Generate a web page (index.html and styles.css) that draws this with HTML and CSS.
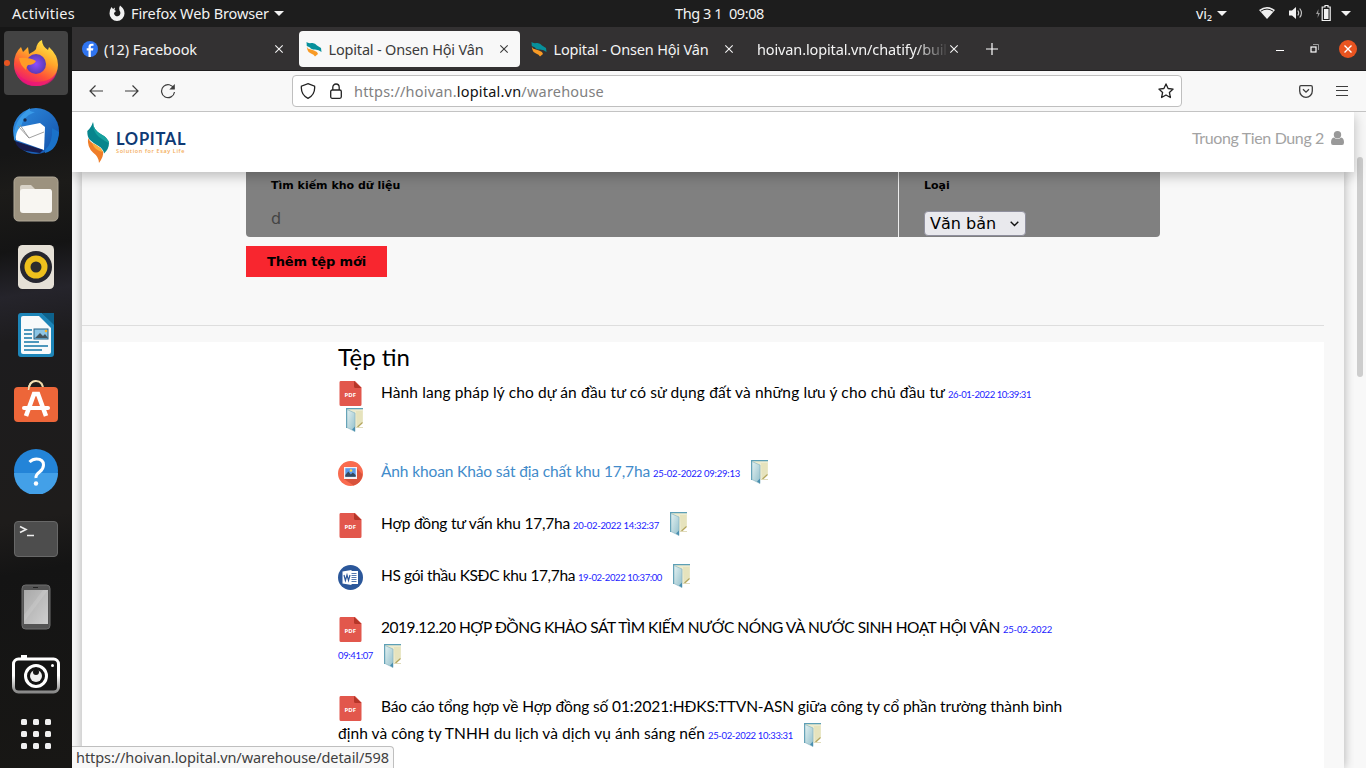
FILE: index.html
```html
<!DOCTYPE html>
<html lang="vi">
<head>
<meta charset="utf-8">
<title>Lopital - Onsen Hội Vân</title>
<link rel="stylesheet" href="styles.css">
</head>
<body>
<svg width="0" height="0" class="defs">
  <defs>
    <linearGradient id="fxg" x1="0.8" y1="0" x2="0.3" y2="1"><stop offset="0" stop-color="#fff04a"/><stop offset=".4" stop-color="#ffa52a"/><stop offset=".7" stop-color="#ff5038"/><stop offset="1" stop-color="#e8127c"/></linearGradient>
    <radialGradient id="fxp"><stop offset="0" stop-color="#8d4dff"/><stop offset="1" stop-color="#5b3bb5"/></radialGradient>
    <linearGradient id="tb" x1="0" y1="0" x2="1" y2="1"><stop offset="0" stop-color="#2f8de0"/><stop offset="1" stop-color="#124fa8"/></linearGradient>
    <linearGradient id="cam" x1="0" y1="0" x2="0" y2="1"><stop offset=".5" stop-color="#fff"/><stop offset="1" stop-color="#888"/></linearGradient>
    <linearGradient id="scr" x1="0" y1="0" x2="1" y2="1"><stop offset="0" stop-color="#a9a9a9"/><stop offset="1" stop-color="#cfcfcf"/></linearGradient>
    <linearGradient id="glass" x1="0" y1="0" x2="1" y2="1"><stop offset="0" stop-color="#e4f1f0"/><stop offset="1" stop-color="#93c0cc"/></linearGradient>
    <symbol id="pdf" viewBox="0 0 25 25"><path d="M2.500 0H17l6.500 6.500V23.500a1.500 1.500 0 0 1-1.500 1.500H3a1.500 1.500 0 0 1-1.500-1.500V1.500A1.500 1.500 0 0 1 2.500 0z" fill="#e2574c"/><path d="M16 0l7.500 7H17.500A1.500 1.500 0 0 1 16 5.500z" fill="#b53629"/></symbol>
    <symbol id="img" viewBox="0 0 25 25"><circle cx="12.500" cy="12.500" r="12.500" fill="#f96b4f"/><path d="M18 6.500l6.500 7a12 12 0 0 1-9 11L6 18z" fill="#d8533c"/><rect x="6" y="6" width="13" height="12" fill="#f2f2f5"/><rect x="7.300" y="7.200" width="10.400" height="8.600" fill="#5b9bea"/><path d="M7.300 14l3-3.500 2.500 3 2-2 2.900 2.500v1.800H7.300z" fill="#34495e"/><circle cx="13" cy="9.500" r="1.300" fill="#f8d64e"/></symbol>
    <symbol id="word" viewBox="0 0 25 25"><circle cx="12.500" cy="12.500" r="12.500" fill="#2b579a"/><path d="M12 6h8v13h-8z" fill="#fff"/><path d="M13 8.500h5.500M13 10.500h5.500M13 12.500h5.500M13 14.500h5.500M13 16.500h5.500" stroke="#2b579a" stroke-width=".8"/><path d="M4.500 6.500l9-1.500v15l-9-1.500z" fill="#fff"/><path d="M6 10l1.400 5.500L9 10l1.500 5.500L12 10" fill="none" stroke="#2b579a" stroke-width="1.200"/></symbol>
    <symbol id="folder" viewBox="0 0 18 24"><path d="M1 .5h16v14L13 19H1z" fill="#edebcf"/><path d="M10 3h6.500v11L11 18z" fill="#e6e3bd"/><path d="M.5 20V.7H17" fill="none" stroke="#5c9fb6" stroke-width="1.200"/><path d="M1 1.500l8 3.500v18.500L1 19.500z" fill="url(#glass)" stroke="#7fb0c0" stroke-width=".6"/><path d="M6 21.500l3 2V18.500z" fill="#4a8fb0"/><path d="M11.500 19l5-4.500" stroke="#b3a45c" stroke-width="1.200"/><path d="M9.500 19.500H17" stroke="#d8d2aa" stroke-width=".8"/></symbol>
    <symbol id="x" viewBox="0 0 10 10"><path d="M1.300 1.300l7.400 7.400M8.700 1.300L1.300 8.700" fill="none" stroke="currentColor" stroke-width="1.100"/></symbol>
    <symbol id="caret" viewBox="0 0 10 5"><path d="M0 0h10L5 5z" fill="currentColor"/></symbol>
    <symbol id="fav" viewBox="0 0 16 16"><path d="M.5 1Q2 2.500 5.500 2T11 4.500L15 7l.5 4Q13 8.500 9 8.500T4 6.500L.8 5z" fill="#07909b"/><path d="M.8 6Q2 8 5 8.500T11 11l1 2-3 2.500Q8 13.500 5 12.500T1.500 9z" fill="#f89a25"/></symbol>
  </defs>
</svg>
<div class="topbar">
  <span class="activities">Activities</span>
  <svg class="fxmono" width="16" height="16" viewBox="0 0 16 16"><path fill-rule="evenodd" d="M1 5l1.500-3 1.500 2 2-1.500-.5 2.500L7 6 5 8a3.200 3.200 0 1 0 5.500-2.200Q9.500 3 11 .5q4.500 3 4.500 8a7.500 7.500 0 0 1-15 0z" fill="#f2f2f2"/></svg>
  <span class="appname">Firefox Web Browser</span>
  <svg class="appcaret" width="10" height="5"><use href="#caret"/></svg>
  <span class="clock">Thg 3 1 &nbsp;09:08</span>
  <span class="tray">
    <span class="vi">vi₂</span>
    <svg class="vicaret" width="10" height="5"><use href="#caret"/></svg>
    <svg class="wifi" width="16" height="12" viewBox="0 0 16 12"><path d="M0 3Q8-3 16 3L8 12z" fill="#eee"/><path d="M1.800 4.200Q8 0 14.200 4.200" fill="none" stroke="#1d1d1d" stroke-width="1"/></svg>
    <svg class="vol" width="16" height="14" viewBox="0 0 16 14"><path d="M1 4.500h3L8 1v12L4 9.500H1z" fill="#f2f2f2"/><path d="M9.800 4.500q1.800 2.500 0 5M11.700 2.500q3.500 4.500 0 9" fill="none" stroke="#ccc" stroke-width="1.100"/></svg>
    <svg class="bat" width="15" height="16" viewBox="0 0 15 16"><path d="M2.500 4L0 9h2l-.5 4L4 8H2.200z" fill="#999"/><path d="M9 .5h3v1.500h2.200v13.500H6.200V2H9z" fill="none" stroke="#f2f2f2" stroke-width="1.200"/><rect x="8" y="4" width="4.500" height="10" fill="#f2f2f2"/></svg>
    <svg class="syscaret" width="10" height="5"><use href="#caret"/></svg>
  </span>
</div>
<div class="desktop">
  <aside class="dock">
    <div class="tile active"><i class="running"></i>
      <svg width="46" height="48" viewBox="0 0 46 48"><path d="M1 25Q1 14 8 8l2 5 5-5 1 7q6-3 7-5Q24 3 29 1q0 6 6 10l1-3q9 8 9 18a22 21 0 0 1-44 0z" fill="url(#fxg)"/><path d="M2 29q5 14 21 14t21-11q-3 15-21 15T2 29z" fill="#e8127c" opacity=".65"/><circle cx="23" cy="25" r="10" fill="url(#fxp)"/><path d="M6 19q10-1 17 3-2 4-8 4-2 2-2 5Q7 26 6 19z" fill="#ff9b27"/></svg></div>
    <div class="tile"><svg width="48" height="48" viewBox="0 0 48 48"><circle cx="24" cy="24" r="23" fill="url(#tb)"/><path d="M2 34Q0 14 18 1q-2 4 5 4Q10 10 9 20z" fill="#3a9be8"/><path d="M8 20L28 16l5 4-1 23L4 33q-1-7 4-13z" fill="#fff"/><path d="M8 18l9 13 15-6M17 31L6 19" fill="none" stroke="#888" stroke-width=".8"/><path d="M3 34l28 9-3 3-14-2Q5 42 3 34z" fill="#161b4c"/><path d="M33 43q8-7 7-22l7 4q-1 18-14 21z" fill="#1a72c9"/><circle cx="13" cy="13" r="1.700" fill="#182b50"/></svg></div>
    <div class="tile"><svg width="46" height="46" viewBox="0 0 46 46"><rect x="1" y="1" width="44" height="44" rx="4.500" fill="#9c927f" stroke="#b1a998" stroke-width="1"/><path d="M7 11q0-2 2-2h9l4 4h15q1 0 1 2v6H7z" fill="#d8d2c7"/><rect x="7" y="13" width="32" height="24" rx="3" fill="#f8f6f2"/></svg></div>
    <div class="tile"><svg width="38" height="46" viewBox="0 0 38 46"><rect x="1" y="1" width="36" height="44" rx="4.500" fill="#e5e0d6"/><circle cx="19" cy="23" r="16" fill="#26262f"/><circle cx="19" cy="23" r="11.500" fill="#eec01d"/><circle cx="19" cy="23" r="5.500" fill="#2d2d2d"/></svg></div>
    <div class="tile"><svg width="38" height="46" viewBox="0 0 38 46"><path d="M4 1h21l12 11v30q0 3-3 3H4q-3 0-3-3V4q0-3 3-3z" fill="#1d85b8"/><path d="M25 1h12v12z" fill="#0d628c"/><path d="M6 4h16l12 12v24q0 2-2 2H6q-2 0-2-2V6q0-2 2-2z" fill="#f8fafb"/><path d="M7 18h8M7 22h8M7 26h8M7 34h24M7 38h18M7 30h15" stroke="#1477a8" stroke-width="1.500"/><rect x="17" y="17" width="14" height="10" fill="#8dc5e5" stroke="#24658a"/><path d="M18 26l5-5 3 3 2-2 3 4z" fill="#44545c"/><circle cx="29" cy="19" r="1.300" fill="#ffb325"/></svg></div>
    <div class="tile store"><svg width="46" height="46" viewBox="0 0 46 46"><path d="M15.500 13Q16 3 23 3t7.500 10" fill="none" stroke="#efd9aa" stroke-width="2"/><rect x="1" y="9" width="44" height="35" rx="4" fill="#ed6639"/><path d="M15.500 12Q16 3 23 3" fill="none" stroke="#f5e3b9" stroke-width="1.500"/><path d="M13 38l8-22h4l8 22" fill="none" stroke="#fff" stroke-width="4.500"/><rect x="9" y="28" width="28" height="4" rx="2" fill="#fff"/></svg></div>
    <div class="tile"><svg width="46" height="46" viewBox="0 0 46 46"><circle cx="23" cy="23" r="22" fill="#2384d8"/><path d="M1 25h44a22 22 0 0 1-44 0z" fill="#43a0e8"/><path d="M16.500 14q3-3 7-3 7 0 7 6 0 4-4 7t-3.500 6" fill="none" stroke="#fff" stroke-width="3"/><circle cx="23" cy="35.500" r="2.200" fill="#fff"/></svg></div>
    <div class="tile"><svg width="46" height="38" viewBox="0 0 46 38"><rect x="1.500" y="1.500" width="43" height="35" rx="3.500" fill="#4d4d4d" stroke="#686868"/><path d="M7 6.500l6 3-6 3M14 15.500h7" fill="none" stroke="#eee" stroke-width="1.600"/></svg></div>
    <div class="tile"><svg width="30" height="46" viewBox="0 0 30 46"><rect x="1" y="1" width="28" height="44" rx="3.500" fill="#545454" stroke="#6e6e6e"/><rect x="3" y="6" width="24" height="34" fill="url(#scr)"/><path d="M3 31L22 6h5L3 38z" fill="#fff" opacity=".12"/><path d="M12 3.500h5" stroke="#222"/></svg></div>
    <div class="tile camera"><svg width="48" height="40" viewBox="0 0 48 40"><path d="M9 5V1h6v4" fill="#fff"/><rect x="1.500" y="5" width="45" height="33" rx="5" fill="#141414" stroke="url(#cam)" stroke-width="3"/><circle cx="24" cy="22" r="10.500" fill="none" stroke="#fff" stroke-width="3"/><circle cx="24" cy="22" r="6" fill="#eee"/><circle cx="24" cy="18" r="3" fill="#141414"/><circle cx="40.500" cy="11.500" r="1.500" fill="#fff"/></svg></div>
    <div class="tile apps"><i></i><i></i><i></i><i></i><i></i><i></i><i></i><i></i><i></i></div>
  </aside>
  <section class="window">
    <div class="tabs">
      <div class="tab t1"><svg width="16" height="16" viewBox="0 0 16 16"><circle cx="8" cy="8" r="8" fill="#2f74f0"/><path d="M8.800 16V9.500H11l.4-2.200H8.800V6q0-1.200 1.300-1.200h1.400v-2Q6.500 2 6.500 5.700v1.600H4.700v2.200h1.800V16z" fill="#fff"/></svg><span class="label">(12) Facebook</span><svg class="x" width="10" height="10"><use href="#x"/></svg></div>
      <div class="tab t2"><svg width="16" height="16"><use href="#fav"/></svg><span class="label">Lopital - Onsen Hội Vân</span><svg class="x" width="10" height="10"><use href="#x"/></svg></div>
      <div class="tab t3"><svg width="16" height="16"><use href="#fav"/></svg><span class="label">Lopital - Onsen Hội Vân</span><svg class="x" width="10" height="10"><use href="#x"/></svg></div>
      <div class="tab t4"><span class="label">hoivan.lopital.vn/chatify/buil</span><svg class="x" width="10" height="10"><use href="#x"/></svg></div>
      <svg class="plus" width="12" height="12" viewBox="0 0 12 12"><path d="M6 0v12M0 6h12" stroke="#fff" stroke-width="1.200"/></svg>
      <div class="winbtns"><svg width="8" height="9" viewBox="0 0 8 9"><path d="M0 6.500h8" stroke="#fff"/></svg><svg width="9" height="9" viewBox="0 0 9 9"><path d="M3 .5h5.500V6" fill="none" stroke="#999"/><rect x="1" y="3" width="5" height="5" fill="none" stroke="#fff" stroke-width="1.200"/></svg><svg width="18" height="18" viewBox="0 0 18 18"><circle cx="9" cy="9" r="9" fill="#e95420"/><path d="M5.500 5.500l7 7M12.500 5.500l-7 7" stroke="#fff" stroke-width="1.400"/></svg></div>
    </div>
    <div class="toolbar">
      <svg width="14" height="12" viewBox="0 0 14 12"><path d="M14 6H1M6.500.5L1 6l5.500 5.500" fill="none" stroke="#3d3d3d" stroke-width="1.200"/></svg>
      <svg width="14" height="12" viewBox="0 0 14 12"><path d="M0 6h13M7.500.5L13 6l-5.500 5.500" fill="none" stroke="#3d3d3d" stroke-width="1.200"/></svg>
      <svg class="reload" width="16" height="16" viewBox="0 0 16 16"><path d="M14 5.500A6.500 6.500 0 1 0 14.500 9" fill="none" stroke="#3d3d3d" stroke-width="1.200"/><path d="M14.800 1v5.500H9.300z" fill="#3d3d3d"/></svg>
      <div class="urlbar">
        <svg width="16" height="16" viewBox="0 0 16 16"><path d="M8 .7l6.600 2.500q.8 8.500-6.600 12.200Q.6 11.700 1.400 3.200z" fill="none" stroke="#222" stroke-width="1.300"/></svg>
        <svg class="lock" width="12" height="16" viewBox="0 0 12 16"><rect x=".7" y="7" width="10.600" height="8.300" rx="1.500" fill="none" stroke="#222" stroke-width="1.300"/><path d="M2.800 7V4.200a3.200 3.200 0 0 1 6.400 0V7" fill="none" stroke="#222" stroke-width="1.300"/></svg>
        <span class="url">https://hoivan.<b>lopital.vn</b>/warehouse</span>
        <svg class="star" width="16" height="16" viewBox="0 0 16 16"><path d="M8 .9l2.100 4.600 5 .6-3.700 3.400 1 5L8 12l-4.400 2.500 1-5L.9 6.100l5-.6z" fill="none" stroke="#222" stroke-width="1.300" stroke-linejoin="round"/></svg>
      </div>
      <svg class="pocket" width="14" height="13" viewBox="0 0 14 13"><path d="M2 .7h10q1.300 0 1.300 1.300v4a6.300 6.300 0 0 1-12.600 0V2Q.7.700 2 .7z" fill="none" stroke="#3d3d3d" stroke-width="1.300"/><path d="M4 4.300l3 2.900 3-2.900" fill="none" stroke="#3d3d3d" stroke-width="1.300"/></svg>
      <svg class="menu" width="12" height="10" viewBox="0 0 12 10"><path d="M0 .5h12M0 4.500h12M0 9.500h12" stroke="#3d3d3d"/></svg>
    </div>
    <div class="viewport">
      <div class="page">
        <header class="site">
          <svg width="22" height="41" viewBox="0 0 22 41"><path d="M6 0Q4 6 .3 9q0 6 2.200 8.500Q6 21 11.500 24q5 3 5.500 7.500Q22 27 22 21q-1-5-7.500-8.500Q6 8 6 0z" fill="#07858d"/><path d="M6 0q-1 9 6 15 7 5 10 6-1-5-7.500-8.500Q6 8 6 0z" fill="#17a29f"/><path d="M1 16q-1 9 5 14.500 6 4.500 6 10.500Q17 34 16 29.500 13 25 8 22.500 3 20 1 16z" fill="#ef7d28"/><path d="M5 21q3 8 11 9-3-5-8-7.500z" fill="#fbb03b"/></svg>
          <div class="brand"><b>LOPITAL</b><small>Solution for Esay Life</small></div>
          <div class="user"><span>Truong Tien Dung 2</span><svg width="13" height="14" viewBox="0 0 13 14"><circle cx="6.500" cy="3.700" r="3.700" fill="#999"/><path d="M3 6.500q3.500 3 7 0 3 .5 3 5 0 2.500-2 2.500H2q-2 0-2-2.500 0-4.500 3-5z" fill="#999"/></svg></div>
        </header>
        <main class="container">
          <div class="search">
            <div class="field keyword"><label>Tìm kiếm kho dữ liệu</label><span class="value">d</span></div>
            <div class="field type"><label>Loại</label><div class="select"><span>Văn bản</span><svg width="9" height="6" viewBox="0 0 9 6"><path d="M.7.700l3.800 3.800L8.300.7" fill="none" stroke="#111" stroke-width="1.400"/></svg></div></div>
          </div>
          <div class="add">Thêm tệp mới</div>
          <div class="files">
            <h2>Tệp tin</h2>
            <div class="file legal"><div class="line"><svg class="ic"><use href="#pdf"/><text x="6.500" y="15.500" textLength="11.500">PDF</text></svg><a>Hành lang pháp lý cho dự án đầu tư có sử dụng đất và những lưu ý cho chủ đầu tư</a><time>26-01-2022 10:39:31</time></div><div class="line more"><svg class="fo lead"><use href="#folder"/></svg></div></div>
            <div class="file photo"><div class="line"><svg class="ic"><use href="#img"/></svg><a class="hover">Ảnh khoan Khảo sát địa chất khu 17,7ha</a><time>25-02-2022 09:29:13</time><svg class="fo"><use href="#folder"/></svg></div></div>
            <div class="file consult"><div class="line"><svg class="ic"><use href="#pdf"/><text x="6.500" y="15.500" textLength="11.500">PDF</text></svg><a>Hợp đồng tư vấn khu 17,7ha</a><time>20-02-2022 14:32:37</time><svg class="fo"><use href="#folder"/></svg></div></div>
            <div class="file bid"><div class="line"><svg class="ic"><use href="#word"/></svg><a>HS gói thầu KSĐC khu 17,7ha</a><time>19-02-2022 10:37:00</time><svg class="fo"><use href="#folder"/></svg></div></div>
            <div class="file survey"><div class="line"><svg class="ic"><use href="#pdf"/><text x="6.500" y="15.500" textLength="11.500">PDF</text></svg><a>2019.12.20 HỢP ĐỒNG KHẢO SÁT TÌM KIẾM NƯỚC NÓNG VÀ NƯỚC SINH HOẠT HỘI VÂN</a><time>25-02-2022</time></div><div class="line more"><time class="lead">09:41:07</time><svg class="fo"><use href="#folder"/></svg></div></div>
            <div class="file report"><div class="line"><svg class="ic"><use href="#pdf"/><text x="6.500" y="15.500" textLength="11.500">PDF</text></svg><a>Báo cáo tổng hợp về Hợp đồng số 01:2021:HĐKS:TTVN-ASN giữa công ty cổ phần trường thành bình</a></div><div class="line more"><a>định và công ty TNHH du lịch và dịch vụ ánh sáng nến</a><time>25-02-2022 10:33:31</time><svg class="fo"><use href="#folder"/></svg></div></div>
          </div>
        </main>
      </div>
      <div class="scrollbar"><i></i></div>
      <div class="status">https://hoivan.lopital.vn/warehouse/detail/598</div>
    </div>
  </section>
</div>
</body>
</html>
```
FILE: styles.css
```css
* { box-sizing: border-box; }
body { margin: 0; width: 1366px; height: 768px; overflow: hidden; background: #161616; font-family: "Noto Sans", "Open Sans", sans-serif; font-size: 14.5px; white-space: nowrap; }
svg { display: block; flex: none; }
.defs { position: absolute; }

/* system bar */
.topbar { height: 27px; background: #1d1d1d; color: #f2f2f2; display: flex; align-items: center; padding: 0 0 1px 12px; line-height: 24px; }
.activities { width: 97px; letter-spacing: .258px; }
.fxmono { margin-right: 6px; }
.appname { width: 143px; letter-spacing: -.118px; }
.appcaret { margin-right: 391px; }
.clock { width: 521px; letter-spacing: -.405px; }
.tray { display: flex; align-items: center; }
.vi { width: 21px; }
.vicaret { margin-right: 32px; }
.wifi { margin-right: 13px; }
.vol { margin-right: 12px; }
.bat { margin-right: 10px; }

/* dock */
.desktop { display: flex; height: 741px; }
.dock { width: 72px; padding: 4px; display: flex; flex-direction: column; gap: 4px; background: linear-gradient(170deg, #161616 0 17%, #1c1b19 22%, #141414 30%, #25242b 36%, #1d1c1e 42%, #1e1c1b 66%, #141414 73%, #181715 100%); }
.tile { height: 64px; display: flex; align-items: center; justify-content: center; border-radius: 4px; position: relative; }
.tile.active { background: #434343; }
.tile.store { padding-bottom: 5px; }
.tile.camera { padding-bottom: 3px; }
.running { position: absolute; left: 0; top: 29px; width: 6px; height: 6px; border-radius: 3px; background: #e95420; }
.tile.apps { height: 46px; display: grid; grid-template-columns: repeat(3, 6px); gap: 6px; align-content: center; }
.apps i { height: 6px; border-radius: 1.5px; background: #f0f0f0; }

/* browser window */
.window { width: 1294px; display: flex; flex-direction: column; }
.tabs { height: 44px; background: #333132; border-bottom: 1px solid #1f1e1f; color: #f4f4f4; display: flex; align-items: center; }
.tab { height: 36px; display: flex; align-items: center; border-radius: 4px; }
.tab > svg:first-child { margin-right: 6px; }
.tab .label { overflow: hidden; letter-spacing: -.175px; }
.t1 { width: 227px; padding-left: 10px; }
.t1 .label { width: 170px; letter-spacing: -.082px; }
.t2 { width: 221px; padding-left: 7px; background: #f8f8f8; color: #3b3b3b; }
.t2 .label, .t3 .label { width: 171px; padding-left: .5px; }
.t3 { width: 225px; padding-left: 11px; }
.t4 { width: 229px; padding-left: 12px; }
.t4 .label { width: 190px; letter-spacing: -.13px; -webkit-mask-image: linear-gradient(90deg, #000 158px, transparent 192px); mask-image: linear-gradient(90deg, #000 158px, transparent 192px); }
.t4 .x { margin-left: 2px; }
.plus { margin-left: 12px; }
.winbtns { margin-left: 278px; display: flex; align-items: center; gap: 26px; }
.winbtns svg:last-child { margin-left: -6px; }
.toolbar { height: 41px; background: #f8f8f8; border-bottom: 1px solid #c3c3c3; display: flex; align-items: center; padding-left: 17px; gap: 22px; }
.reload { margin: 0 1px 0 -1px; }
.urlbar { width: 890px; height: 32px; margin-left: 93px; background: #fff; border: 1px solid #bfbfbf; border-radius: 4px; display: flex; align-items: center; padding-left: 7px; color: #818181; }
.lock { margin: 0 12px 0 14px; }
.url { width: 804px; letter-spacing: .202px; }
.url b { font-weight: 400; color: #111; }
.pocket { margin-left: 95px; }
.menu { margin-left: 1px; }

/* page */
.viewport { height: 656px; display: flex; position: relative; overflow: hidden; }
.page { width: 1282px; background: #f8f8f8; }
.site { height: 60px; background: #fff; display: flex; padding-left: 15px; position: relative; z-index: 2; box-shadow: 0 4px 12px rgba(0, 0, 0, .25); align-items: center; }
.brand { width: 1083px; padding-left: 7px; display: flex; flex-direction: column; }
.brand b { font: 700 16.5px/18px Lato, sans-serif; letter-spacing: .7px; color: #0e3a75; }
.brand small { font: 600 5.5px/7px "Open Sans", sans-serif; letter-spacing: .612px; color: #f3ac58; }
.user { display: flex; align-items: center; color: #a3a3a3; font: 400 16px/20px Lato, sans-serif; letter-spacing: -.371px; margin-top: -9px; }
.user span { width: 131px; margin-right: 8px; }
.container { width: 1262px; height: 596px; margin-left: 10px; box-shadow: 0 0 10px rgba(0, 0, 0, .3); background: #f8f8f8; }
.search { width: 914px; height: 65px; margin-left: 164px; display: flex; background: #808080; border-radius: 0 0 4px 4px; font-family: "DejaVu Sans", sans-serif; }
.field { display: flex; flex-direction: column; align-items: flex-start; padding: 7px 0 0 25px; }
.keyword { width: 653px; border-right: 1px solid #eee; }
.field label { font-size: 11px; line-height: 14px; font-weight: 700; color: #000; }
.value { font-size: 16px; line-height: 20px; margin-top: 16px; color: #444; }
.select { width: 102px; height: 25px; margin-top: 18px; background: #e9e9ed; border: 1px solid #8f8f9d; border-radius: 4px; display: flex; align-items: center; padding-left: 5px; font-size: 16px; color: #000; }
.select span { width: 80px; }
.add { width: 141px; height: 31px; margin: 9px 0 0 164px; background: #f8262f; padding-left: 21px; font: 700 13px/31px "DejaVu Sans", sans-serif; letter-spacing: -.151px; color: #000; }

/* file list */
.files { width: 1242px; height: 443px; margin-top: 48px; border-top: 1px solid #dedede; padding-left: 256px; background: linear-gradient(#f8f8f8 16px, #fff 16px); font-family: Lato, sans-serif; font-size: 15.5px; color: #000; }
.files h2 { margin: 0; padding-top: 16px; height: 54px; font-size: 24px; line-height: 30px; font-weight: 400; }
.file { margin-bottom: 25px; }
.line { display: flex; height: 27px; align-items: baseline; line-height: 23px; }
.ic { width: 25px; height: 25px; margin: 1px 18px 0 0; align-self: flex-start; }
.ic text { font: 700 6px "Open Sans", sans-serif; fill: #fff; }
.fo { width: 18px; height: 24px; margin-left: 11px; align-self: flex-start; }
.more .fo { margin-top: 1px; }
.fo.lead { margin-left: 8px; }
.hover { color: #428bca; }
time { font-size: 9.5px; color: #2222ff; margin-left: 3px; }
time.lead { margin-left: 0; line-height: 26px; }
.legal { margin-bottom: 26px; }
.legal .line { line-height: 25px; }
.legal a { letter-spacing: .117px; }
.legal time { letter-spacing: -.442px; }
.photo a { letter-spacing: -.127px; }
.photo time { letter-spacing: -.231px; }
.consult a { letter-spacing: -.213px; }
.consult time { letter-spacing: -.284px; }
.bid a { letter-spacing: -.372px; }
.bid time { letter-spacing: -.389px; }
.survey a { letter-spacing: -.476px; }
.survey time { letter-spacing: -.214px; }
.survey time.lead { letter-spacing: -.352px; }
.report a { letter-spacing: -.119px; }
.report .more a { letter-spacing: .041px; }
.report time { letter-spacing: -.336px; }

.scrollbar { width: 12px; background: #f8f8f8; padding: 45px 0 0 3px; }
.scrollbar i { display: block; width: 6px; height: 220px; border-radius: 3px; background: #cdcdcd; }
.status { position: absolute; left: 0; bottom: 0; width: 322px; height: 22px; background: #f8f8f8; border: 1px solid #bfbfbf; border-width: 1px 1px 0 0; border-radius: 0 4px 0 0; padding-left: 4px; line-height: 21px; letter-spacing: -.077px; color: #3f3f3f; z-index: 4; }
```
